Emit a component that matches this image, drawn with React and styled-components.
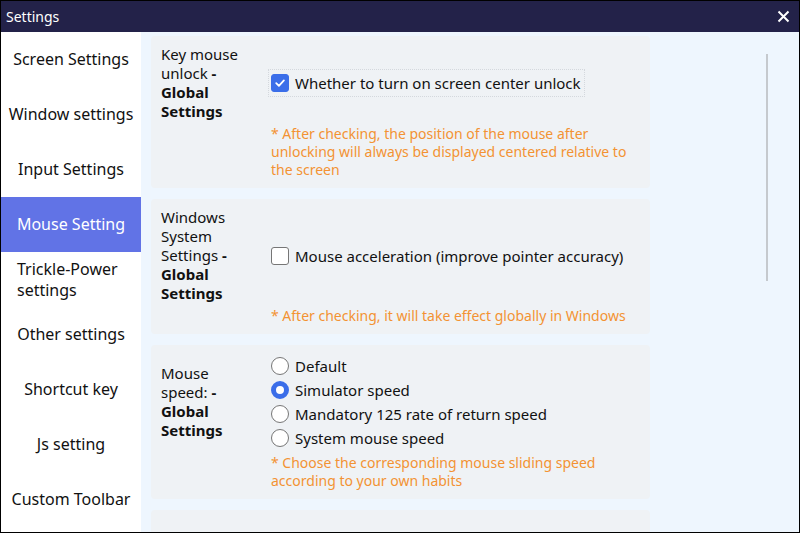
import React from 'react';
import styled, { createGlobalStyle } from 'styled-components';

const GlobalStyle = createGlobalStyle`
    html, body {
        margin: 0;
        padding: 0;
        background: #fff;
    }
    * {
        box-sizing: border-box;
    }
`;

const Window = styled.div`
    width: 800px;
    height: 533px;
    border: 1px solid #000;
    display: flex;
    flex-direction: column;
    overflow: hidden;
    font-family: 'Noto Sans', 'Open Sans', sans-serif;
    color: #111;
`;

const TitleBar = styled.div`
    height: 31px;
    flex: 0 0 31px;
    background: #232249;
    color: #fff;
    display: flex;
    align-items: center;
    justify-content: space-between;
    padding: 0 8px 0 5px;
    font-size: 14px;
`;

const CloseButton = styled.button`
    border: 0;
    background: transparent;
    padding: 0;
    width: 16px;
    height: 16px;
    display: flex;
    align-items: center;
    justify-content: center;
    cursor: pointer;
`;

const Body = styled.div`
    flex: 1;
    display: flex;
    min-height: 0;
`;

const Sidebar = styled.div`
    width: 140px;
    flex: 0 0 140px;
    background: #fff;
`;

const NavItem = styled.div`
    height: 55px;
    padding: ${(props) => (props.wrap ? '0 16px' : '0 2px')};
    display: flex;
    align-items: center;
    justify-content: ${(props) => (props.wrap ? 'flex-start' : 'center')};
    white-space: ${(props) => (props.wrap ? 'normal' : 'nowrap')};
    font-size: 16px;
    line-height: 21px;
    background: ${(props) => (props.active ? '#6173e6' : 'transparent')};
    color: ${(props) => (props.active ? '#fff' : '#111')};
    cursor: pointer;
`;

const Main = styled.div`
    flex: 1;
    position: relative;
    background: #eef6fe;
    padding: 4px 0 0 10px;
    overflow: hidden;
`;

const ScrollThumb = styled.div`
    position: absolute;
    left: 625px;
    top: 22px;
    width: 2px;
    height: 227px;
    background: #c5c9ce;
`;

const Card = styled.div`
    width: 499px;
    min-height: ${(props) => props.minHeight || 0}px;
    background: #eff2f5;
    border-radius: 4px;
    padding: 9px 10px;
    margin-bottom: 11px;
`;

const Row = styled.div`
    display: flex;
    align-items: center;
`;

const Label = styled.div`
    width: 110px;
    flex: 0 0 110px;
    padding-right: 20px;
    font-size: 15px;
    line-height: 19px;
    b {
        font-weight: 700;
    }
`;

const Controls = styled.div`
    display: flex;
    flex-direction: column;
`;

const CheckRow = styled.label`
    display: flex;
    align-items: center;
    gap: 6px;
    font-size: 15px;
    padding: 3px 3px 3px 2px;
    margin-left: -3px;
    border: 1px dotted ${(props) => (props.focused ? '#d4d8dd' : 'transparent')};
`;

const Box = styled.span`
    width: 18px;
    height: 18px;
    border-radius: 3px;
    display: inline-flex;
    align-items: center;
    justify-content: center;
    background: ${(props) => (props.checked ? '#3b6ee9' : '#fff')};
    border: 1px solid ${(props) => (props.checked ? '#3b6ee9' : '#767676')};
`;

const RadioRow = styled.label`
    display: flex;
    align-items: center;
    gap: 6px;
    height: 24px;
    font-size: 15px;
`;

const Radio = styled.span`
    width: 18px;
    height: 18px;
    border-radius: 50%;
    background: #fff;
    border: ${(props) => (props.checked ? '5px solid #3b6ee9' : '1px solid #767676')};
`;

const Note = styled.div`
    margin: 4px 0 0 110px;
    font-size: 14px;
    line-height: 18px;
    color: #f39233;
`;

const NAV = [
    'Screen Settings',
    'Window settings',
    'Input Settings',
    'Mouse Setting',
    'Trickle-Power settings',
    'Other settings',
    'Shortcut key',
    'Js setting',
    'Custom Toolbar'
];

const SPEEDS = ['Default', 'Simulator speed', 'Mandatory 125 rate of return speed', 'System mouse speed'];

const Check = () => (
    <svg width='12' height='12' viewBox='0 0 12 12'>
        <path d='M2.2 6.2 L4.9 8.8 L9.9 3.4' fill='none' stroke='#fff' strokeWidth='1.8' strokeLinecap='round' strokeLinejoin='round' />
    </svg>
);

export default function App() {
    return (
        <Window>
            <GlobalStyle />
            <TitleBar>
                <span>Settings</span>
                <CloseButton>
                    <svg width='13' height='13' viewBox='0 0 13 13'>
                        <path d='M1.5 1.5 L11.5 11.5 M11.5 1.5 L1.5 11.5' stroke='#fff' strokeWidth='2' />
                    </svg>
                </CloseButton>
            </TitleBar>
            <Body>
                <Sidebar>
                    {NAV.map((name) => (
                        <NavItem key={name} active={name === 'Mouse Setting'} wrap={name.startsWith('Trickle')}>
                            <div>{name}</div>
                        </NavItem>
                    ))}
                </Sidebar>
                <Main>
                    <Card>
                        <Row>
                            <Label>
                                Key mouse unlock <b>- Global Settings</b>
                            </Label>
                            <Controls>
                                <CheckRow focused>
                                    <Box checked>
                                        <Check />
                                    </Box>
                                    Whether to turn on screen center unlock
                                </CheckRow>
                            </Controls>
                        </Row>
                        <Note>
                            * After checking, the position of the mouse after unlocking will always be displayed centered
                            relative to the screen
                        </Note>
                    </Card>
                    <Card>
                        <Row>
                            <Label>
                                Windows System Settings <b>- Global Settings</b>
                            </Label>
                            <Controls>
                                <CheckRow>
                                    <Box />
                                    Mouse acceleration (improve pointer accuracy)
                                </CheckRow>
                            </Controls>
                        </Row>
                        <Note>* After checking, it will take effect globally in Windows</Note>
                    </Card>
                    <Card>
                        <Row>
                            <Label>
                                Mouse speed: <b>- Global Settings</b>
                            </Label>
                            <Controls>
                                {SPEEDS.map((s) => (
                                    <RadioRow key={s}>
                                        <Radio checked={s === 'Simulator speed'} />
                                        {s}
                                    </RadioRow>
                                ))}
                            </Controls>
                        </Row>
                        <Note>* Choose the corresponding mouse sliding speed according to your own habits</Note>
                    </Card>
                    <Card minHeight={80} />
                    <ScrollThumb />
                </Main>
            </Body>
        </Window>
    );
}
